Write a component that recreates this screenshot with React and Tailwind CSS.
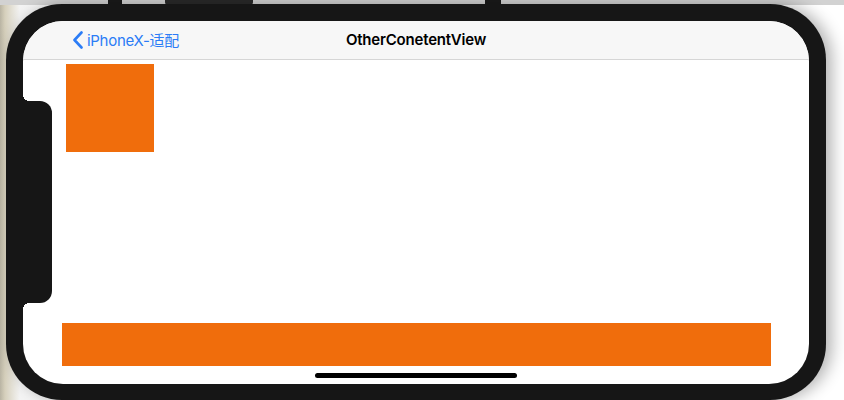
import React from "react";

export default function App() {
  return (
    <div className="relative w-[844px] h-[400px] overflow-hidden bg-[linear-gradient(to_right,#b9b4a3_0px,#d6d0bc_5px,#f4f4f4_20px,#ffffff_60%,#ffffff_100%)]">
      {/* top strip buttons */}
      <div className="absolute left-0 top-0 w-full h-[5px] bg-[#d2d2d2]" />
      <div className="absolute left-[108px] top-0 w-[14px] h-[5px] bg-[#1a1a1a]" />
      <div className="absolute left-[165px] top-0 w-[88px] h-[5px] bg-[#2a2a2a] rounded-b-[3px]" />
      <div className="absolute left-[485px] top-0 w-[16px] h-[5px] bg-[#1a1a1a]" />

      {/* phone frame */}
      <div className="absolute left-[6px] top-[4px] w-[820px] h-[396px] rounded-[56px] bg-[#161616] pt-[17px] px-[17px] pb-[16px] shadow-[6px_0_16px_rgba(0,0,0,0.3)]">
        <div className="relative w-full h-full rounded-[40px] bg-white overflow-hidden flex flex-col font-['Inter','Noto_Sans_CJK_SC',sans-serif]">
          {/* nav bar */}
          <div className="relative h-[39px] shrink-0 bg-[#f7f7f7] border-b border-[#d6d6d6] flex items-center">
            <div className="flex items-center pl-[49px] text-[#2b7cf6]">
              <svg width="12" height="18" viewBox="0 0 12 18" className="mr-[3px]">
                <path d="M9.5 1.5 L2.5 9 L9.5 16.5" fill="none" stroke="currentColor" strokeWidth="2.6" strokeLinecap="round" strokeLinejoin="round" />
              </svg>
              <span className="text-[15px] leading-none tracking-[-0.3px]">iPhoneX-适配</span>
            </div>
            <div className="absolute inset-0 flex items-center justify-center text-[15px] font-semibold text-black tracking-[-0.2px]">
              OtherConetentView
            </div>
          </div>

          {/* content */}
          <div className="flex-1 flex flex-col justify-between">
            <div className="ml-[43px] mt-[4px] w-[88px] h-[88px] bg-[#f06d0c]" />
            <div className="ml-[39px] mb-[18px] w-[709px] h-[43px] bg-[#f06d0c]" />
          </div>

          {/* notch */}
          <div className="absolute left-0 top-[80px] w-[29px] h-[202px] bg-[#161616] rounded-r-[12px]" />
          <div className="absolute left-0 top-[74px] w-[6px] h-[6px] bg-[radial-gradient(circle_at_100%_0%,transparent_6px,#161616_6px)]" />
          <div className="absolute left-0 top-[282px] w-[6px] h-[6px] bg-[radial-gradient(circle_at_100%_100%,transparent_6px,#161616_6px)]" />
          {/* home indicator */}
          <div className="absolute left-1/2 -translate-x-1/2 bottom-[6px] w-[202px] h-[5px] rounded-full bg-black" />
        </div>
      </div>
    </div>
  );
}
